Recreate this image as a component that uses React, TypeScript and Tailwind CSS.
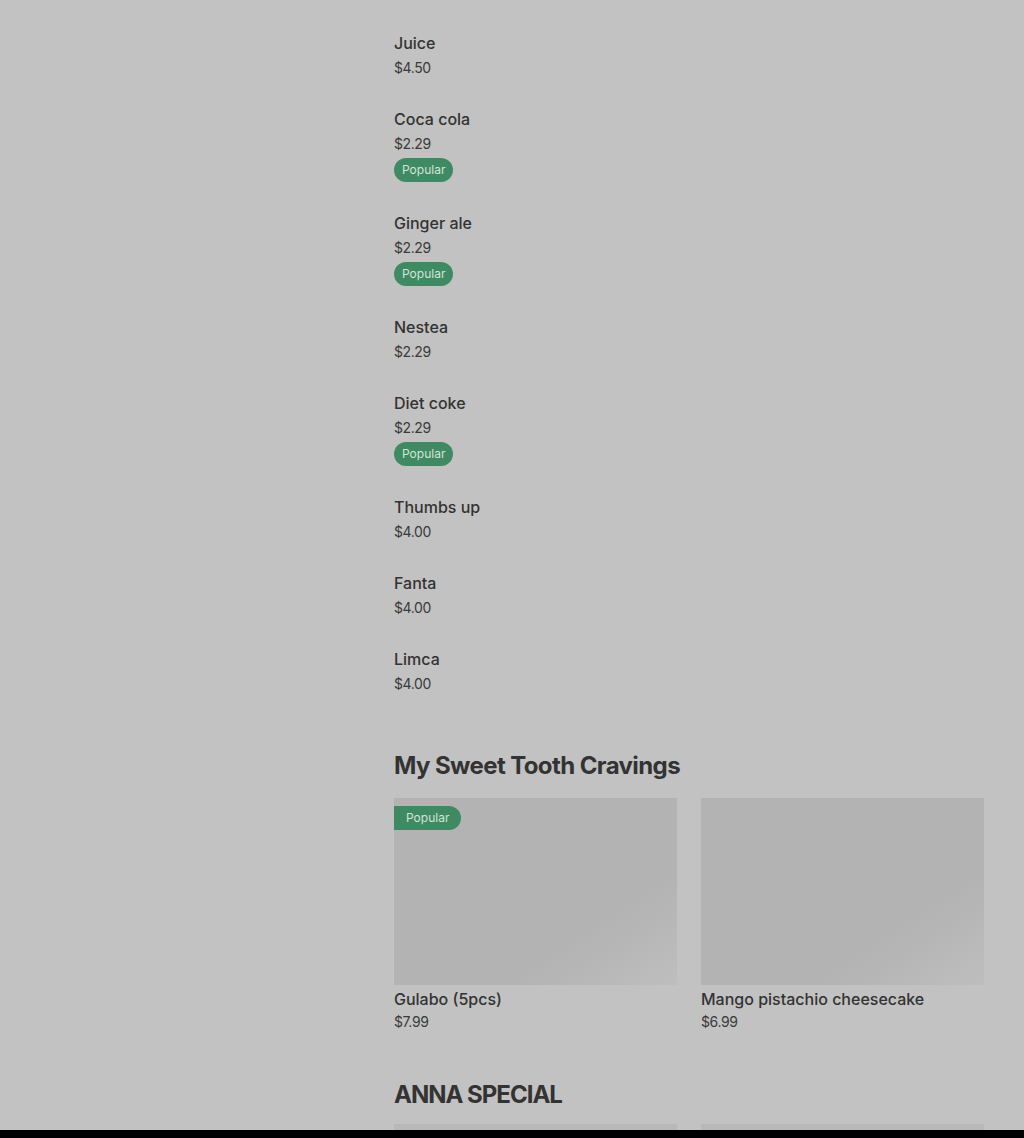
import React from 'react';

type Item = { name: string; price: string; popular?: boolean };

const DRINKS: Item[] = [
  { name: 'Lassi', price: '$4.50' },
  { name: 'Juice', price: '$4.50' },
  { name: 'Coca cola', price: '$2.29', popular: true },
  { name: 'Ginger ale', price: '$2.29', popular: true },
  { name: 'Nestea', price: '$2.29' },
  { name: 'Diet coke', price: '$2.29', popular: true },
  { name: 'Thumbs up', price: '$4.00' },
  { name: 'Fanta', price: '$4.00' },
  { name: 'Limca', price: '$4.00' },
];

const SWEETS: Item[] = [
  { name: 'Gulabo (5pcs)', price: '$7.99', popular: true },
  { name: 'Mango pistachio cheesecake', price: '$6.99' },
];

const Badge: React.FC = () => (
  <span className="flex h-6 items-center rounded-full bg-[#3f8a63] px-2 text-[12px] leading-none text-[#cfe6d7]">Popular</span>
);

const ListItem: React.FC<{ item: Item }> = ({ item }) => (
  <div className="flex flex-col items-start pb-[29px]">
    <div className="h-6 text-[16px] leading-6 font-medium text-[#333]">{item.name}</div>
    <div className="mt-[3px] h-5 text-[14px] leading-5 text-[#3a3a3a] tracking-[-0.4px]">{item.price}</div>
    {item.popular && (
      <div className="mt-1 flex h-6">
        <Badge />
      </div>
    )}
  </div>
);

const Card: React.FC<{ item: Item }> = ({ item }) => (
  <div className="flex flex-col">
    <div className="relative h-[187px] bg-gradient-to-br from-[#b3b3b3] from-70% to-[#bebebe]">
      {item.popular && (
        <span className="absolute left-0 top-2 flex h-6 items-center rounded-r-full bg-[#3f8a63] px-3 text-[12px] leading-none text-[#cfe6d7]">
          Popular
        </span>
      )}
    </div>
    <div className="mt-[2px] h-6 text-[16px] leading-6 font-medium text-[#333]">{item.name}</div>
    <div className="mt-px h-5 text-[14px] leading-5 text-[#3a3a3a] tracking-[-0.4px]">{item.price}</div>
  </div>
);

export default function App() {
  return (
    <div className="flex h-[1138px] flex-col overflow-hidden bg-[#c2c2c2] font-['Inter',sans-serif]">
      <div className="flex-1 overflow-hidden">
        <div className="ml-[394px] mr-[40px] -mt-[45px]">
          {DRINKS.map((d) => (
            <ListItem key={d.name} item={d} />
          ))}

          <h2 className="mt-[27px] h-8 text-[24px] leading-8 font-bold tracking-[-0.6px] text-[#333]">My Sweet Tooth Cravings</h2>
          <div className="mt-[16px] grid grid-cols-2 gap-6">
            {SWEETS.map((s) => (
              <Card key={s.name} item={s} />
            ))}
          </div>

          <h2 className="mt-[47px] h-8 text-[24px] leading-8 font-bold tracking-[-1px] text-[#333]">ANNA SPECIAL</h2>
          <div className="mt-[13px] grid grid-cols-2 gap-6">
            <div className="h-[187px] bg-[#b8b8b8]" />
            <div className="h-[187px] bg-[#b8b8b8]" />
          </div>
        </div>
      </div>
      <div className="h-2 bg-black" />
    </div>
  );
}
